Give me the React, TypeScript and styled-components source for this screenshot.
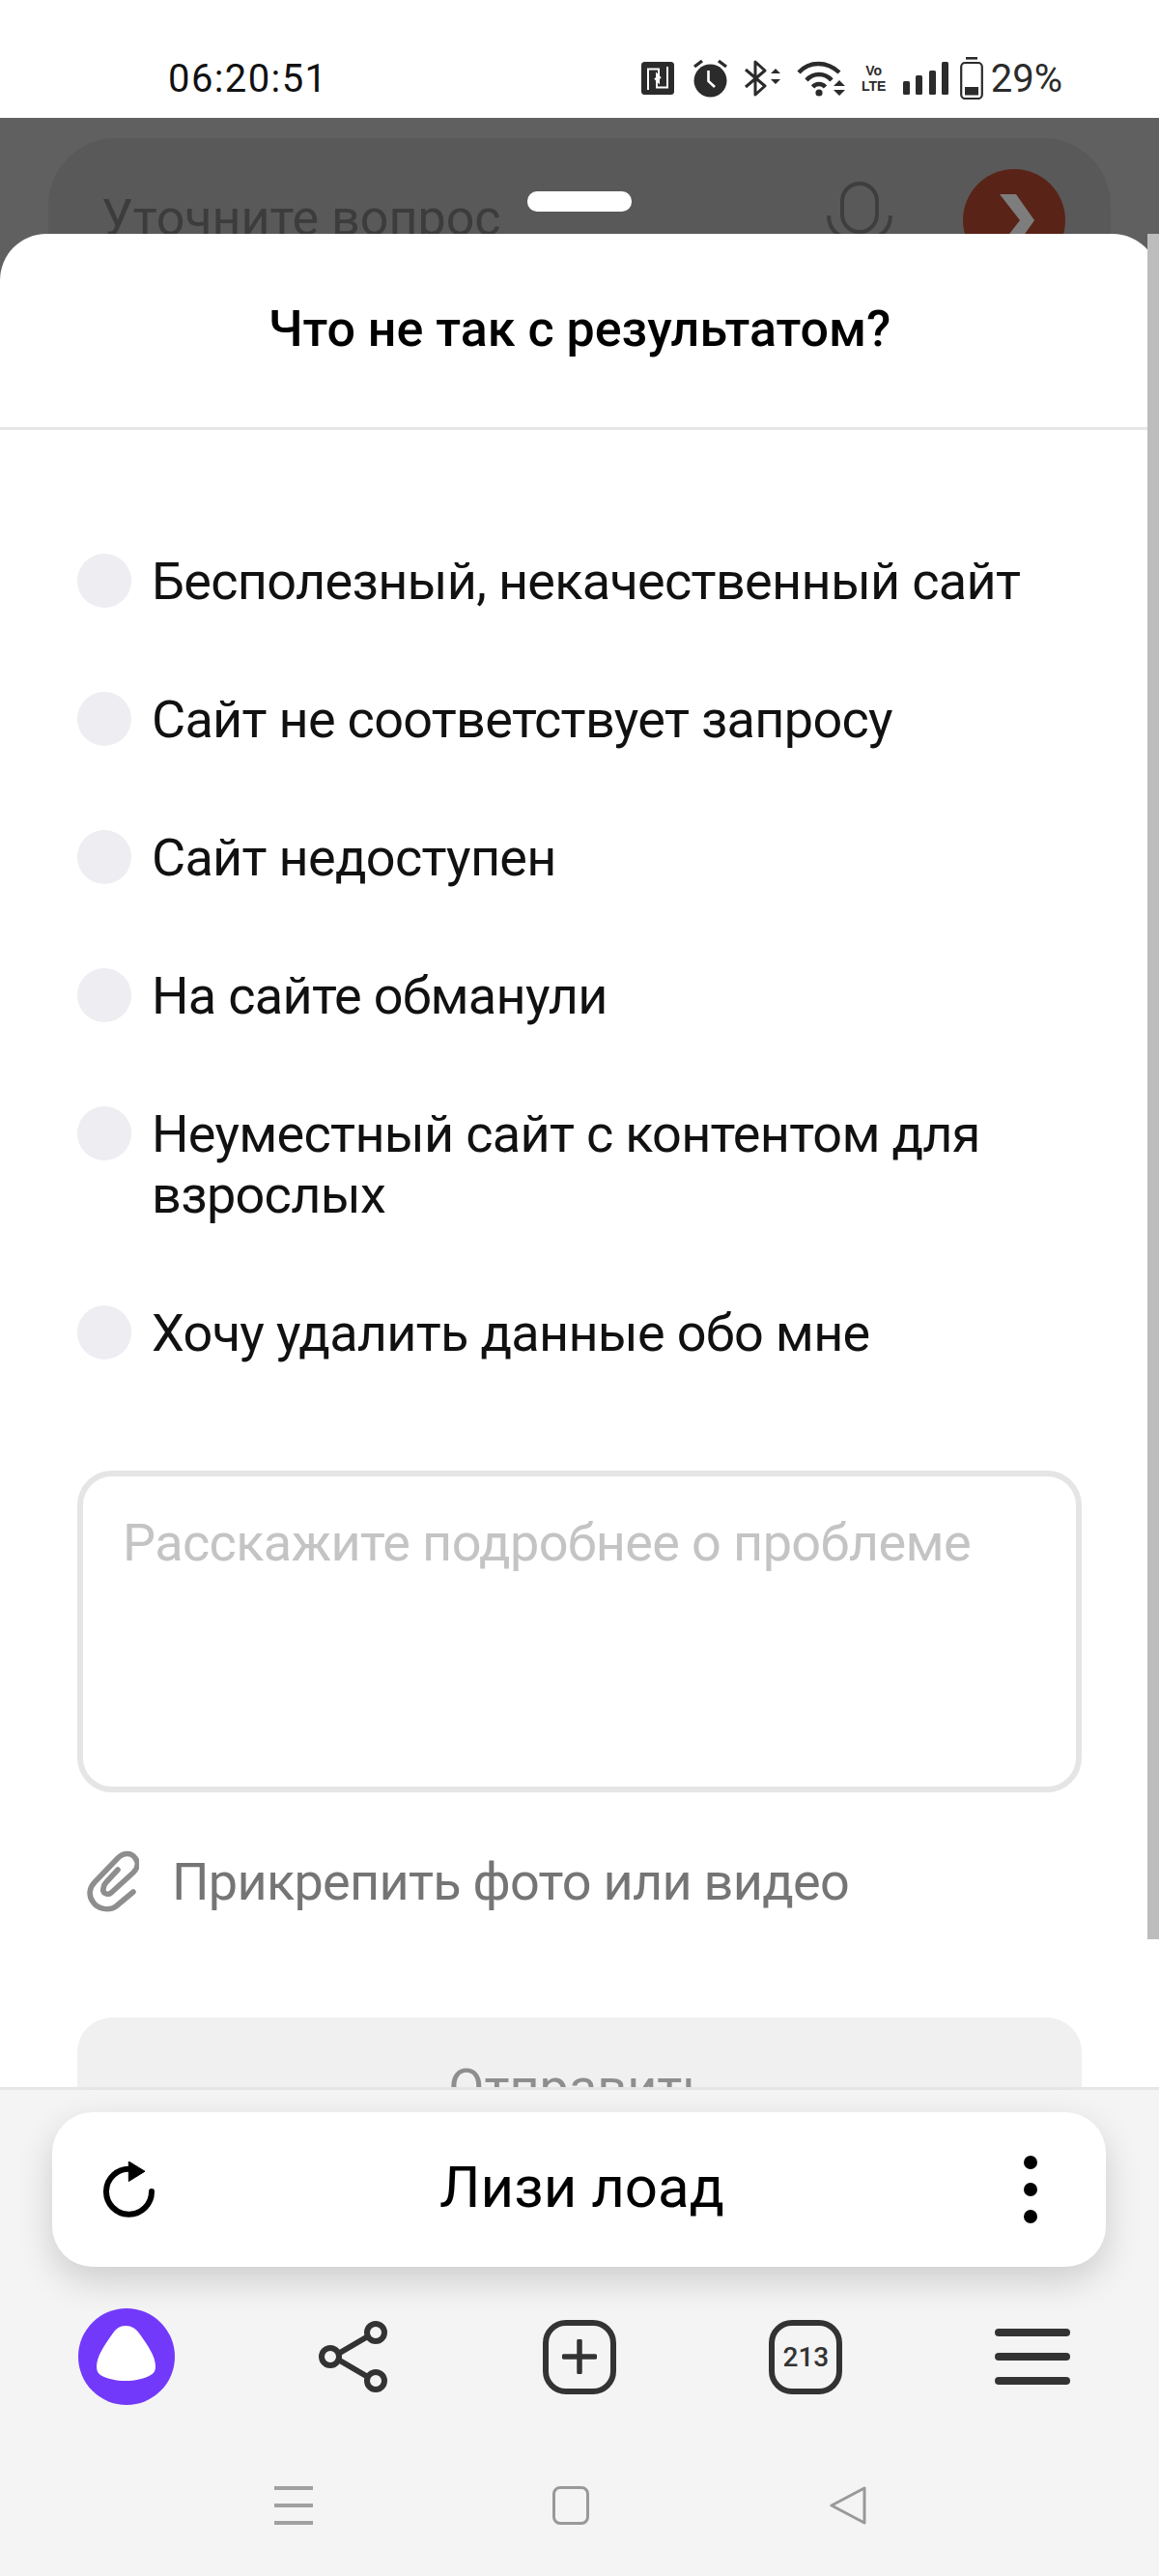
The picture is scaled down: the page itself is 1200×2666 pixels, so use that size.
import { styled, createGlobalStyle } from 'styled-components';

const REASONS = [
  'Бесполезный, некачественный сайт',
  'Сайт не соответствует запросу',
  'Сайт недоступен',
  'На сайте обманули',
  'Неуместный сайт с контентом для взрослых',
  'Хочу удалить данные обо мне',
];

const GlobalStyle = createGlobalStyle`
  html, body {
    margin: 0;
    padding: 0;
    background: #fff;
  }
  * {
    box-sizing: border-box;
  }
`;

const NfcIcon = () => (
  <svg width="34" height="34" viewBox="0 0 34 34">
    <rect width="34" height="34" rx="3.5" fill="#2b2b2b" />
    <path
      d="M7 29V7.5H18V21L14 17M27 5V26.5H16V13L20 17"
      fill="none"
      stroke="#fff"
      strokeWidth="2"
    />
  </svg>
);

const AlarmIcon = () => (
  <svg width="35" height="40" viewBox="0 0 35 40">
    <circle cx="17.5" cy="22.5" r="17" fill="#2b2b2b" />
    <path d="M15.5 12V23L22 29" fill="none" stroke="#fff" strokeWidth="2.6" />
    <path d="M1 8L9 2M34 8L26 2" fill="none" stroke="#2b2b2b" strokeWidth="3.4" />
  </svg>
);

const BluetoothIcon = () => (
  <svg width="38" height="38" viewBox="0 0 38 38">
    <path
      d="M2 10L22 27L12 36V2L22 11L2 28"
      fill="none"
      stroke="#2b2b2b"
      strokeWidth="3"
      strokeLinejoin="round"
    />
    <path d="M28 14L33 9L38 14ZM28 20L33 25L38 20Z" fill="#2b2b2b" />
  </svg>
);

const WifiIcon = () => (
  <svg width="50" height="38" viewBox="0 0 50 38">
    <path
      d="M2 13C13 1 31 1 44 13M10 21C17 13 29 13 36 21M16.5 28C20 24 26 24 29.5 28"
      fill="none"
      stroke="#2b2b2b"
      strokeWidth="4.4"
    />
    <circle cx="23" cy="34" r="3.6" fill="#2b2b2b" />
    <path d="M38 27L44 21L50 27ZM38 31L44 37L50 31Z" fill="#2b2b2b" />
  </svg>
);

const SignalIcon = () => (
  <svg width="47" height="34" viewBox="0 0 47 34">
    <rect x="0" y="20" width="7" height="14" rx="1.5" fill="#2b2b2b" />
    <rect x="13" y="14" width="7" height="20" rx="1.5" fill="#2b2b2b" />
    <rect x="27" y="9" width="7" height="25" rx="1.5" fill="#2b2b2b" />
    <rect x="40" y="0" width="7" height="34" rx="1.5" fill="#2b2b2b" />
  </svg>
);

const BatteryIcon = () => (
  <svg width="24" height="44" viewBox="0 0 24 44">
    <rect x="6" y="0" width="12" height="2.6" fill="#2b2b2b" />
    <rect x="1.2" y="6" width="21.6" height="37" rx="4" fill="none" stroke="#2b2b2b" strokeWidth="2.2" />
    <rect x="5" y="31" width="14" height="8.5" fill="#2b2b2b" />
  </svg>
);

const ChevronIcon = () => (
  <svg width="36" height="54" viewBox="0 0 36 54">
    <path d="M0 0H17L36 27L17 54H0L21 27Z" fill="#7d7d7d" />
  </svg>
);

const MicIcon = () => (
  <svg width="70" height="70" viewBox="0 0 70 70">
    <rect x="17" y="2" width="36" height="50" rx="18" fill="none" stroke="#3e3e3e" strokeWidth="4" />
    <path d="M3 35C3 52 16 60 35 60C54 60 67 52 67 35" fill="none" stroke="#3e3e3e" strokeWidth="4" />
  </svg>
);

const ClipIcon = () => (
  <svg width="54" height="64" viewBox="0 0 54 64">
    <path
      d="M48 43L30 58C23 63 11 61 6 53C1 46 3 38 8 33L32 8C38 2 46 2 50 8C54 13 52 19 48 23L25 44C21 47 16 44 17 40C17 38 18 35 20 33L32 20"
      fill="none"
      stroke="#8e8e8e"
      strokeWidth="5.6"
      strokeLinecap="round"
      strokeLinejoin="round"
    />
  </svg>
);

const ReloadIcon = () => (
  <svg width="54" height="58" viewBox="0 0 54 58">
    <path
      d="M50 31A23.5 23.5 0 1 1 28 7.8"
      fill="none"
      stroke="#000"
      strokeWidth="6"
      strokeLinecap="round"
    />
    <path d="M26.3 0L43 10.2L26.3 20.5Z" fill="#000" stroke="#000" strokeWidth="1" strokeLinejoin="round" />
  </svg>
);

const AliceIcon = () => (
  <svg width="100" height="100" viewBox="0 0 100 100">
    <circle cx="50" cy="50" r="50" fill="#7339fb" />
    <path
      fill="#fff"
      d="M49 18C55 18 60 21 64 27C72 38 80 50 80 60C80 64 79 67 75 69C68 73 58 75 49 75C40 75 30 73 23 69C20 67 19 64 19 60C19 50 27 38 35 27C39 21 43 18 49 18Z"
    />
  </svg>
);

const ShareIcon = () => (
  <svg width="72" height="74" viewBox="0 0 72 74">
    <path d="M15 37L56 13M15 37L56 61" stroke="#333" strokeWidth="6" />
    <circle cx="12" cy="37" r="9" fill="#f4f4f4" stroke="#333" strokeWidth="6" />
    <circle cx="59" cy="12" r="9" fill="#f4f4f4" stroke="#333" strokeWidth="6" />
    <circle cx="59" cy="62" r="9" fill="#f4f4f4" stroke="#333" strokeWidth="6" />
  </svg>
);

const PlusIcon = () => (
  <svg width="36" height="36" viewBox="0 0 36 36">
    <path d="M18 2V34M2 18H34" stroke="#333" strokeWidth="5.5" strokeLinecap="round" />
  </svg>
);

const App = () => {
  return (
    <>
      <GlobalStyle />
      <St.Page>
        <St.StatusBar>
          <St.Time>06:20:51</St.Time>
          <St.StatusIcons>
            <St.NfcSlot>
              <NfcIcon />
            </St.NfcSlot>
            <AlarmIcon />
            <BluetoothIcon />
            <WifiIcon />
            <St.VoLte>
              <span>Vo</span>
              <span>LTE</span>
            </St.VoLte>
            <SignalIcon />
            <St.BatterySlot>
              <BatteryIcon />
            </St.BatterySlot>
            <St.Percent>29%</St.Percent>
          </St.StatusIcons>
        </St.StatusBar>

        <St.DimHeader>
          <St.SearchPill>
            <St.SearchText>Уточните вопрос</St.SearchText>
            <St.MicSlot>
              <MicIcon />
            </St.MicSlot>
            <St.SearchGo>
              <ChevronIcon />
            </St.SearchGo>
          </St.SearchPill>
          <St.Handle />
        </St.DimHeader>

        <St.Sheet>
          <St.SheetTitle>Что не так с результатом?</St.SheetTitle>

          <St.ReasonList>
            {REASONS.map((reason) => (
              <St.Reason key={reason}>
                <St.Radio />
                <St.ReasonText>{reason}</St.ReasonText>
              </St.Reason>
            ))}
          </St.ReasonList>

          <St.Comment>
            <St.Placeholder>Расскажите подробнее о проблеме</St.Placeholder>
          </St.Comment>

          <St.Attach>
            <ClipIcon />
            <St.AttachText>Прикрепить фото или видео</St.AttachText>
          </St.Attach>

          <St.SendBtn>Отправить</St.SendBtn>
        </St.Sheet>
        <St.Scrollbar />

        <St.BottomBar>
          <St.AddressCard>
            <ReloadIcon />
            <St.SiteName>Лизи лоад</St.SiteName>
            <St.Dots>
              <i />
              <i />
              <i />
            </St.Dots>
          </St.AddressCard>

          <St.Toolbar>
            <St.ToolItem>
              <AliceIcon />
            </St.ToolItem>
            <St.ToolItem>
              <ShareIcon />
            </St.ToolItem>
            <St.ToolItem>
              <St.TabBox>
                <PlusIcon />
              </St.TabBox>
            </St.ToolItem>
            <St.ToolItem>
              <St.TabBox>213</St.TabBox>
            </St.ToolItem>
            <St.ToolItem>
              <St.Burger>
                <i />
                <i />
                <i />
              </St.Burger>
            </St.ToolItem>
          </St.Toolbar>

          <St.NavBar>
            <St.NavItem>
              <St.NavLines>
                <i />
                <i />
                <i />
              </St.NavLines>
            </St.NavItem>
            <St.NavItem>
              <St.NavSquare />
            </St.NavItem>
            <St.NavItem>
              <svg width="38" height="40" viewBox="0 0 38 40">
                <path
                  d="M36 2V38L2 20Z"
                  fill="none"
                  stroke="#999"
                  strokeWidth="3"
                  strokeLinejoin="round"
                />
              </svg>
            </St.NavItem>
          </St.NavBar>
        </St.BottomBar>
      </St.Page>
    </>
  );
};

export default App;

const FONT = `Roboto, 'Noto Sans', sans-serif`;

const St = {
  Page: styled.div`
    position: relative;
    display: flex;
    flex-direction: column;
    width: 1200px;
    height: 2666px;
    overflow: hidden;
    background: #606060;
    font-family: ${FONT};
  `,

  StatusBar: styled.div`
    position: relative;
    z-index: 1;
    display: flex;
    align-items: center;
    justify-content: space-between;
    flex: none;
    height: 122px;
    padding: 40px 100px 0 174px;
    background: #fff;
  `,

  Time: styled.span`
    color: #111;
    font-size: 40px;
    letter-spacing: 1.4px;
  `,

  StatusIcons: styled.div`
    display: flex;
    align-items: center;
    gap: 17px;
  `,

  NfcSlot: styled.div`
    display: flex;
    margin-right: 3px;
  `,

  VoLte: styled.div`
    display: flex;
    flex-direction: column;
    align-items: center;
    width: 26px;
    color: #2b2b2b;
    font-family: 'Liberation Sans', sans-serif;
    font-size: 14px;
    font-weight: 700;
    line-height: 16px;
  `,

  BatterySlot: styled.div`
    display: flex;
    margin: 0 -9px 0 -5px;
  `,

  Percent: styled.span`
    color: #2b2b2b;
    font-size: 40px;
  `,

  DimHeader: styled.div`
    position: relative;
    flex: none;
    height: 120px;
    padding: 21px 50px 0;
    background: #606060;
  `,

  SearchPill: styled.div`
    display: flex;
    align-items: flex-start;
    height: 170px;
    padding: 32px 47px 0 55px;
    border-radius: 70px;
    background: #595959;
  `,

  SearchText: styled.span`
    flex: 1;
    margin-top: 20px;
    color: #3c3c3c;
    font-size: 52px;
  `,

  MicSlot: styled.div`
    margin-top: 13px;
  `,

  SearchGo: styled.div`
    display: flex;
    align-items: center;
    justify-content: center;
    width: 106px;
    height: 106px;
    margin-left: 72px;
    padding-left: 6px;
    border-radius: 50%;
    background: #5a2318;
  `,

  Handle: styled.div`
    position: absolute;
    top: 76px;
    left: 546px;
    z-index: 2;
    width: 108px;
    height: 21px;
    border-radius: 10px;
    background: #fff;
  `,

  Sheet: styled.div`
    position: relative;
    flex: 1;
    min-height: 0;
    overflow: hidden;
    border-radius: 48px 48px 0 0;
    background: #fff;
  `,

  Scrollbar: styled.div`
    position: absolute;
    top: 242px;
    right: 0;
    width: 12px;
    height: 1765px;
    background: #bdbdbd;
  `,

  SheetTitle: styled.h2`
    display: flex;
    align-items: center;
    justify-content: center;
    height: 203px;
    margin: 0;
    padding-bottom: 4px;
    border-bottom: 3px solid #e6e6e6;
    color: #000;
    font-size: 52px;
    font-weight: 500;
  `,

  ReasonList: styled.div`
    display: flex;
    flex-direction: column;
    gap: 80px;
    padding: 125px 80px 0;
  `,

  Reason: styled.label`
    display: flex;
    align-items: flex-start;
    gap: 21px;
  `,

  Radio: styled.span`
    flex: none;
    width: 56px;
    height: 56px;
    margin-top: 3px;
    border-radius: 50%;
    background: #ededf2;
  `,

  ReasonText: styled.span`
    flex: none;
    width: 950px;
    color: #111;
    font-size: 54px;
    line-height: 63px;
    letter-spacing: -0.7px;
  `,

  Comment: styled.div`
    height: 333px;
    margin: 111px 80px 0;
    padding: 37px 41px;
    border: 6px solid #e5e5e5;
    border-radius: 36px;
  `,

  Placeholder: styled.span`
    color: #c4c4c4;
    font-size: 54px;
    letter-spacing: -0.6px;
  `,

  Attach: styled.div`
    display: flex;
    align-items: center;
    gap: 34px;
    margin: 60px 80px 0 90px;
  `,

  AttachText: styled.span`
    color: #757575;
    font-size: 54px;
    letter-spacing: -0.7px;
  `,

  SendBtn: styled.button`
    display: block;
    width: 1040px;
    height: 144px;
    margin: 109px 80px 0;
    border: 0;
    border-radius: 36px;
    background: #f0f0f0;
    color: #8e8e8e;
    font-family: ${FONT};
    font-size: 54px;
  `,

  BottomBar: styled.div`
    position: relative;
    flex: none;
    height: 506px;
    padding-top: 23px;
    border-top: 3px solid #e6e6e6;
    background: #f4f4f4;
  `,

  AddressCard: styled.div`
    display: flex;
    align-items: center;
    justify-content: space-between;
    height: 160px;
    margin: 0 55px 0 54px;
    padding: 0 71px 0 53px;
    border-radius: 42px;
    background: #fff;
    box-shadow: 0 14px 36px rgba(0, 0, 0, 0.16);
  `,

  SiteName: styled.span`
    margin-bottom: 6px;
    color: #000;
    font-size: 60px;
  `,

  Dots: styled.div`
    display: flex;
    flex-direction: column;
    align-items: flex-end;
    gap: 14px;
    width: 30px;

    & > i {
      width: 14px;
      height: 14px;
      border-radius: 50%;
      background: #000;
    }
  `,

  Toolbar: styled.div`
    display: grid;
    grid-template-columns: repeat(5, 1fr);
    height: 100px;
    margin-top: 43px;
    padding: 0 14px;
  `,

  ToolItem: styled.div`
    display: flex;
    align-items: center;
    justify-content: center;
  `,

  TabBox: styled.div`
    display: flex;
    align-items: center;
    justify-content: center;
    width: 76px;
    height: 77px;
    border: 6px solid #333;
    border-radius: 24px;
    color: #333;
    font-size: 28px;
    font-weight: 500;
  `,

  Burger: styled.div`
    display: flex;
    flex-direction: column;
    gap: 17px;

    & > i {
      width: 78px;
      height: 8px;
      border-radius: 4px;
      background: #333;
    }
  `,

  NavBar: styled.div`
    display: grid;
    grid-template-columns: repeat(3, 1fr);
    height: 40px;
    margin-top: 84px;
    padding: 0 179px 0 161px;
  `,

  NavItem: styled.div`
    display: flex;
    align-items: center;
    justify-content: center;
  `,

  NavLines: styled.div`
    display: flex;
    flex-direction: column;
    gap: 14px;

    & > i {
      width: 40px;
      height: 4px;
      background: #a0a0a0;
    }
  `,

  NavSquare: styled.div`
    width: 38px;
    height: 40px;
    border: 3px solid #999;
    border-radius: 8px;
  `,
};
